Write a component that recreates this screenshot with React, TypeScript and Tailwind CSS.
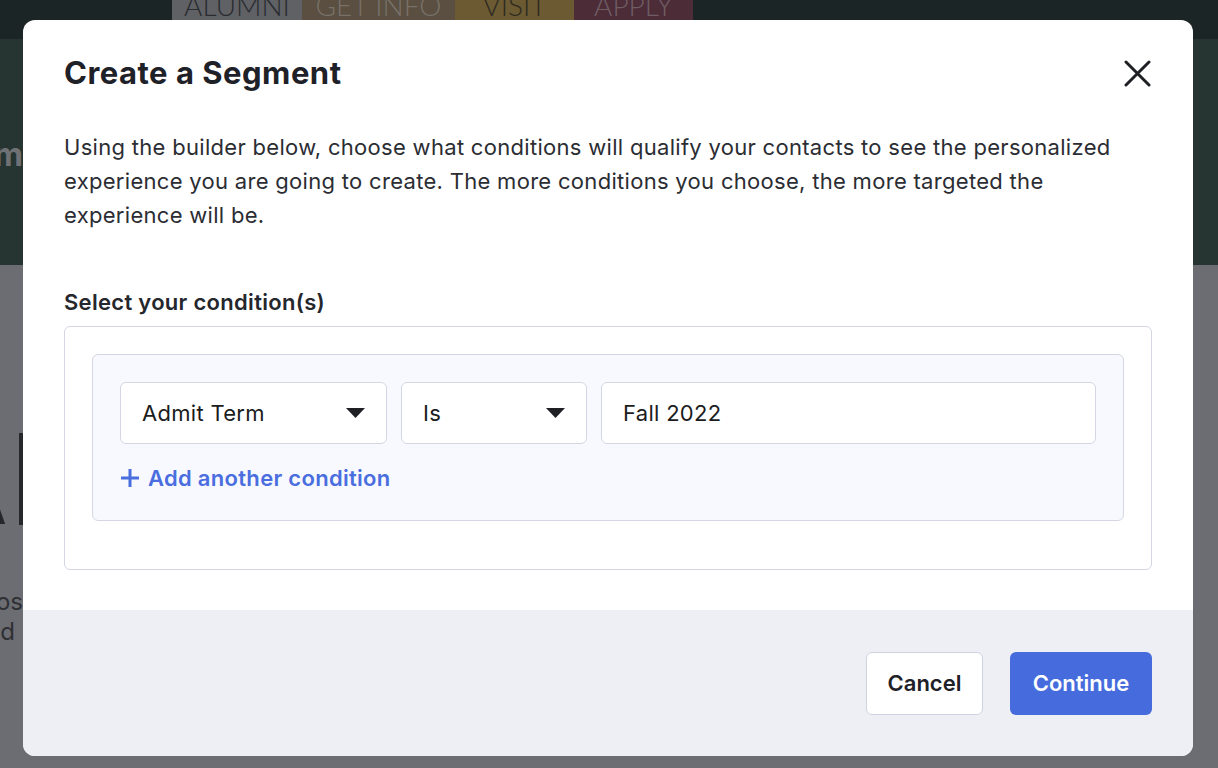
import React from "react";

const tabs = [
  { label: "ALUMNI", w: "w-[130px]", bg: "bg-[#5f6165]", text: "text-[#2a2c30]" },
  { label: "GET INFO", w: "w-[153px]", bg: "bg-[#5a4f40]", text: "text-[#78716a]" },
  { label: "VISIT", w: "w-[119px]", bg: "bg-[#6b5a32]", text: "text-[#2e2a21]" },
  { label: "APPLY", w: "w-[119px]", bg: "bg-[#4b2c37]", text: "text-[#6f5d64]" },
];

function Caret() {
  return (
    <svg width="19" height="10" viewBox="0 0 19 10" className="shrink-0">
      <path d="M0 0 H19 L9.5 10 Z" fill="#1f2024" />
    </svg>
  );
}

function SelectBox({ label, width }: { label: string; width: string }) {
  return (
    <button
      type="button"
      className={`${width} h-[62px] shrink-0 flex items-center justify-between pl-[21px] pr-[21px] bg-white border border-[#d4d7e3] rounded-[6px] text-[22px] tracking-[0.3px] text-[#1b1c20]`}
    >
      <span>{label}</span>
      <Caret />
    </button>
  );
}

export default function App() {
  return (
    <div className="relative h-[768px] overflow-hidden bg-[#6c6d72] font-['Inter',sans-serif]">
      {/* page behind the overlay */}
      <header className="h-[39px] bg-[#1c2526] flex pl-[172px]">
        {tabs.map((t) => (
          <div
            key={t.label}
            className={`${t.w} ${t.bg} ${t.text} h-full flex justify-center overflow-hidden`}
          >
            <span className="text-[28px] font-light leading-none -mt-[9px] font-['Lato',sans-serif]">
              {t.label}
            </span>
          </div>
        ))}
      </header>
      <section className="h-[226px] bg-[#263532] pt-[100px]">
        <div className="w-[23px] overflow-hidden flex justify-end">
          <span className="whitespace-nowrap text-[32px] font-bold leading-none text-[#6f7174]">
            Program
          </span>
        </div>
      </section>
      <section className="pt-[168px]">
        <div className="w-[23px] h-[92px] overflow-hidden flex justify-end items-end gap-[11px]">
          <span className="whitespace-nowrap text-[124px] font-bold leading-[92px] text-[#26272b]">
            A
          </span>
          <span className="w-[4px] h-[92px] shrink-0 bg-[#26272b]" />
        </div>
        <div className="w-[23px] overflow-hidden flex justify-end mt-[62px]">
          <span className="whitespace-nowrap text-[24px] leading-[30px] text-[#2f3034]">purpos</span>
        </div>
        <div className="w-[23px] overflow-hidden flex justify-end pr-[8px]">
          <span className="whitespace-nowrap text-[24px] leading-[30px] text-[#2f3034]">and</span>
        </div>
      </section>

      {/* modal */}
      <div className="absolute left-[23px] top-[20px] w-[1170px] h-[736px] bg-white rounded-[12px] overflow-hidden flex flex-col">
        <div className="flex-1 px-[41px] pt-[35px]">
          <div className="flex items-center justify-between">
            <h2 className="text-[31px] leading-[36px] font-bold tracking-[0.5px] text-[#1f2128]">
              Create a Segment
            </h2>
            <button type="button" className="mr-[1px]" aria-label="Close">
              <svg width="27" height="27" viewBox="0 0 27 27">
                <path d="M2 2 L25 25 M25 2 L2 25" stroke="#1f2024" strokeWidth="3" strokeLinecap="round" />
              </svg>
            </button>
          </div>
          <p className="mt-[39px] max-w-[1070px] text-[22px] leading-[34px] tracking-[0.3px] text-[#2b2d33]">
            Using the builder below, choose what conditions will qualify your contacts to see the personalized
            experience you are going to create. The more conditions you choose, the more targeted the
            experience will be.
          </p>
          <h3 className="mt-[56px] text-[22px] leading-[28px] font-semibold tracking-[0.3px] text-[#25272d]">
            Select your condition(s)
          </h3>
          <div className="mt-[10px] border border-[#d4d7e3] rounded-[6px] pt-[27px] px-[27px] pb-[48px]">
            <div className="bg-[#f8f9fe] border border-[#d4d7e3] rounded-[6px] pt-[27px] px-[27px] pb-[28px]">
              <div className="flex gap-[14px]">
                <SelectBox label="Admit Term" width="w-[267px]" />
                <SelectBox label="Is" width="w-[186px]" />
                <div className="flex-1 h-[62px] flex items-center pl-[21px] bg-white border border-[#d4d7e3] rounded-[6px] text-[22px] tracking-[0.3px] text-[#1b1c20]">
                  Fall 2022
                </div>
              </div>
              <button
                type="button"
                className="mt-[20px] flex items-center gap-[8px] text-[22px] leading-[28px] font-semibold tracking-[0.3px] text-[#4a6ee0]"
              >
                <svg width="20" height="20" viewBox="0 0 20 20">
                  <path d="M10 1 V19 M1 10 H19" stroke="#4a6ee0" strokeWidth="3" />
                </svg>
                Add another condition
              </button>
            </div>
          </div>
        </div>
        <div className="h-[146px] bg-[#eeeff4] flex items-center justify-end gap-[27px] pr-[41px]">
          <button
            type="button"
            className="w-[117px] h-[63px] bg-white border border-[#cfd3e0] rounded-[6px] text-[22px] font-semibold text-[#1f2128]"
          >
            Cancel
          </button>
          <button
            type="button"
            className="w-[142px] h-[63px] bg-[#466bdd] rounded-[6px] text-[22px] font-semibold text-white"
          >
            Continue
          </button>
        </div>
      </div>
    </div>
  );
}
